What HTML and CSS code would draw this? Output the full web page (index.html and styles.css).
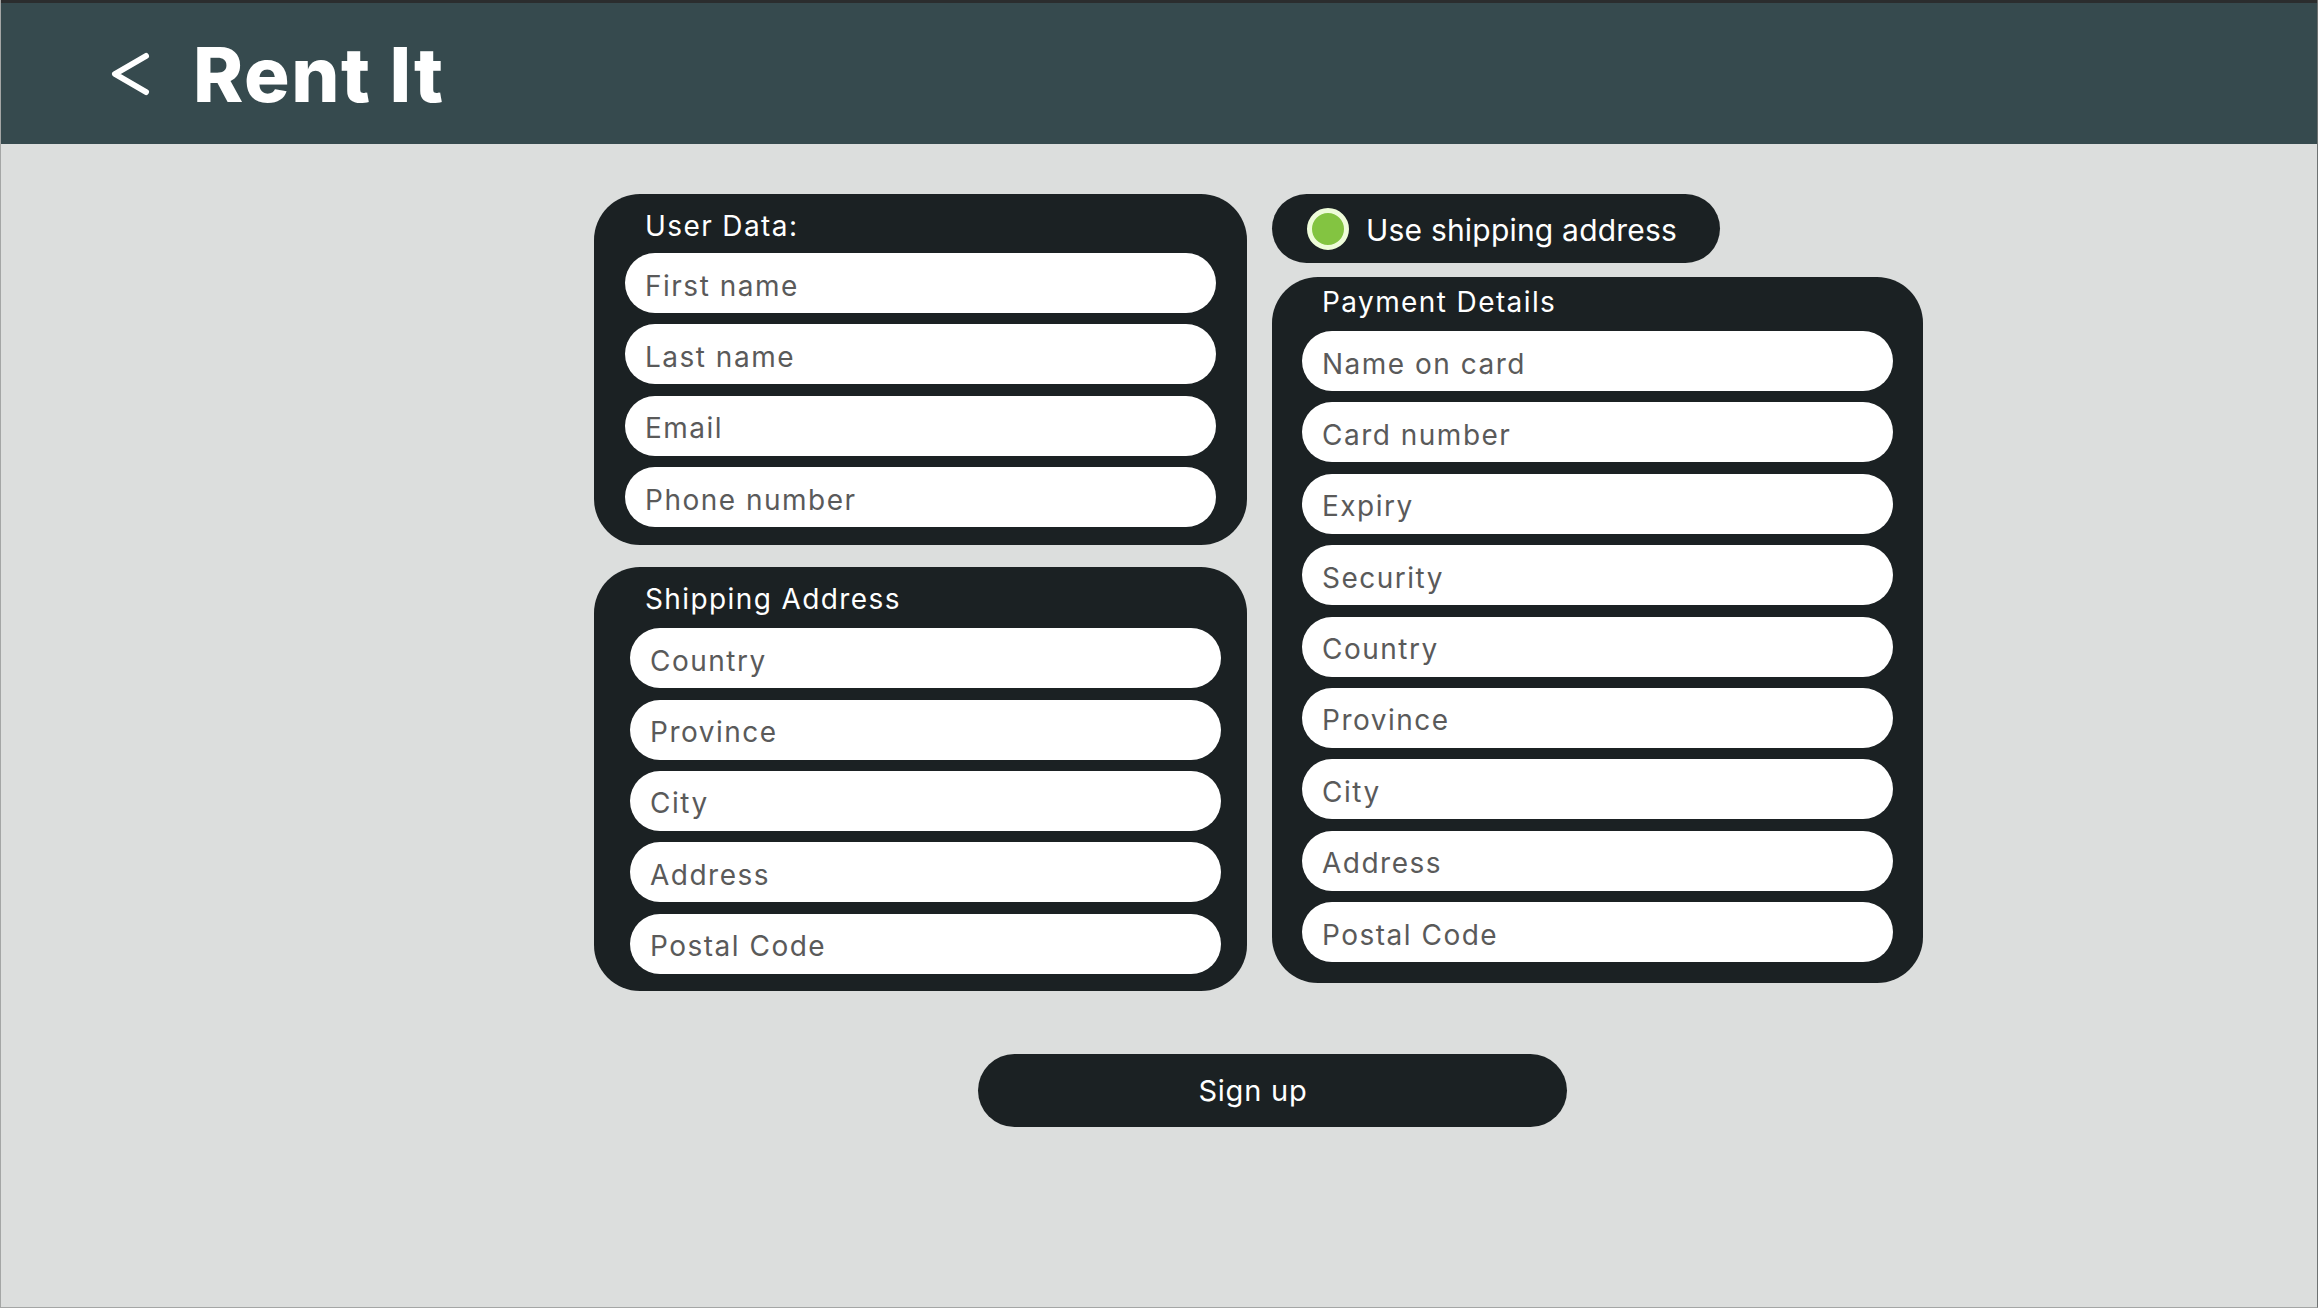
FILE: index.html
```html
<!DOCTYPE html>
<html lang="en">
<head>
<meta charset="utf-8">
<title>Rent It</title>
<link rel="stylesheet" href="styles.css">
</head>
<body>
<header class="topbar">
  <button class="back" aria-label="Back">
    <svg width="44" height="52" viewBox="0 0 44 52"><polyline points="38,8 7,26 38,44" fill="none" stroke="#ffffff" stroke-width="6" stroke-linecap="round" stroke-linejoin="round"/></svg>
  </button>
  <h1 class="brand">Rent It</h1>
</header>
<main class="page">
  <div class="columns">
    <div class="col col-left">
      <section class="card card-user">
        <h2 class="card-title">User Data:</h2>
        <div class="fields">
          <div class="field">First name</div>
          <div class="field">Last name</div>
          <div class="field">Email</div>
          <div class="field">Phone number</div>
        </div>
      </section>
      <section class="card card-ship">
        <h2 class="card-title">Shipping Address</h2>
        <div class="fields">
          <div class="field">Country</div>
          <div class="field">Province</div>
          <div class="field">City</div>
          <div class="field">Address</div>
          <div class="field">Postal Code</div>
        </div>
      </section>
    </div>
    <div class="col col-right">
      <label class="toggle"><span class="radio"></span><span class="toggle-text">Use shipping address</span></label>
      <section class="card card-pay">
        <h2 class="card-title">Payment Details</h2>
        <div class="fields">
          <div class="field">Name on card</div>
          <div class="field">Card number</div>
          <div class="field">Expiry</div>
          <div class="field">Security</div>
          <div class="field">Country</div>
          <div class="field">Province</div>
          <div class="field">City</div>
          <div class="field">Address</div>
          <div class="field">Postal Code</div>
        </div>
      </section>
    </div>
  </div>
  <div class="actions">
    <button class="signup">Sign up</button>
  </div>
</main>
</body>
</html>
```
FILE: styles.css
```css
* { box-sizing: border-box; }
html, body { margin: 0; padding: 0; }
body {
  height: 1308px;
  background: #dcdedd;
  font-family: Inter, "Noto Sans", sans-serif;
  border-left: 1px solid #a4a6a5;
  border-right: 1px solid #6e7272;
  border-bottom: 1px solid #a4a6a5;
  overflow: hidden;
}
.topbar {
  height: 144px;
  background: #364a4e;
  border-top: 3px solid #2b2d2e;
  display: flex;
  align-items: center;
  padding-left: 107px;
}
.back {
  background: none;
  border: 0;
  padding: 0;
  width: 44px;
  height: 52px;
  display: flex;
}
.brand {
  margin: 0 0 0 41px;
  color: #ffffff;
  font-family: Inter, sans-serif;
  font-weight: 800;
  font-size: 76px;
  line-height: 76px;
  letter-spacing: 1.5px;
}
.page {
  padding: 50px 0 0 593px;
}
.columns {
  display: flex;
  gap: 25px;
  align-items: flex-start;
}
.col {
  display: flex;
  flex-direction: column;
}
.col-left { width: 653px; gap: 22px; }
.col-right { width: 651px; gap: 14px; }
.card {
  background: #1b2123;
  border-radius: 46px;
}
.card-title {
  margin: 0;
  color: #ffffff;
  font-weight: 400;
  font-size: 28px;
  line-height: 30px;
  letter-spacing: 1.4px;
  padding-left: 51px;
}
.fields {
  display: flex;
  flex-direction: column;
  gap: 11.4px;
}
.field {
  height: 60px;
  background: #ffffff;
  border-radius: 30px;
  display: flex;
  align-items: center;
  padding-left: 20px;
  padding-top: 5px;
  color: #5a5a5a;
  font-size: 28px;
  letter-spacing: 1.5px;
}
.card-user { padding: 17px 31px 18px 0; }
.card-user .card-title { margin-bottom: 12px; }
.card-user .fields { margin-left: 31px; }
.card-ship { padding: 17px 26px 17px 0; }
.card-ship .card-title { margin-bottom: 14px; }
.card-ship .fields { margin-left: 36px; }
.card-pay { padding: 10px 30px 21px 0; }
.card-pay .card-title { margin-bottom: 14px; padding-left: 50px; }
.card-pay .fields { margin-left: 30px; }
.toggle {
  width: 448px;
  height: 69px;
  border-radius: 35px;
  background: #1b2123;
  display: flex;
  align-items: center;
  padding-left: 35px;
  gap: 17px;
  color: #ffffff;
  font-size: 30px;
  letter-spacing: 0.2px;
}
.radio {
  width: 42px;
  height: 42px;
  border-radius: 50%;
  background: #83c441;
  border: 5px solid #eefcd9;
  flex: none;
}
.toggle-text { padding-top: 2px; }
.actions {
  padding-left: 384px;
  margin-top: 63px;
}
.signup {
  width: 589px;
  height: 73px;
  border: 0;
  border-radius: 37px;
  background: #1b2123;
  color: #ffffff;
  font-family: Inter, sans-serif;
  font-size: 29px;
  letter-spacing: 0.8px;
  padding: 0 39px 0 0;
}
```
